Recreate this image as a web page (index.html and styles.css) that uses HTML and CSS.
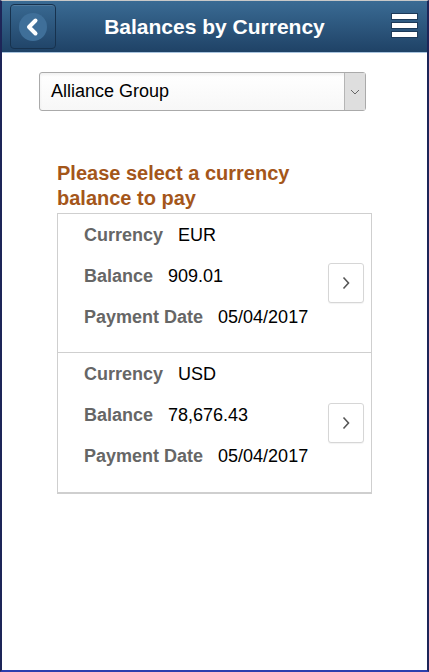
FILE: index.html
```html
<!DOCTYPE html>
<html>
<head>
<meta charset="utf-8">
<title>Balances by Currency</title>
<link rel="stylesheet" href="styles.css">
</head>
<body>
<div class="screen">
  <div class="header">
    <div class="back-btn">
      <span class="back-circle">
        <svg width="28" height="28" viewBox="0 0 28 28">
          <path d="M16.5 7.5 L10 14 L16.5 20.5" fill="none" stroke="#fff" stroke-width="4" stroke-linecap="round" stroke-linejoin="round"/>
        </svg>
      </span>
    </div>
    <h1 class="title">Balances by Currency</h1>
    <div class="menu-btn">
      <span class="bar"></span>
      <span class="bar"></span>
      <span class="bar"></span>
    </div>
  </div>

  <div class="content">
    <div class="select">
      <span class="select-text">Alliance Group</span>
      <span class="select-arrow">
        <svg width="10" height="6" viewBox="0 0 10 6"><path d="M1 1 L5 5 L9 1" fill="none" stroke="#666" stroke-width="1"/></svg>
      </span>
    </div>

    <h2 class="prompt">Please select a currency balance to pay</h2>

    <div class="list">
      <div class="row">
        <div class="fields">
          <div class="field"><span class="label">Currency</span><span class="value">EUR</span></div>
          <div class="field"><span class="label">Balance</span><span class="value">909.01</span></div>
          <div class="field"><span class="label">Payment Date</span><span class="value">05/04/2017</span></div>
        </div>
        <div class="go-btn">
          <svg width="10" height="14" viewBox="0 0 10 14"><path d="M2.5 1.5 L7.5 7 L2.5 12.5" fill="none" stroke="#555" stroke-width="1.6"/></svg>
        </div>
      </div>
      <div class="row">
        <div class="fields">
          <div class="field"><span class="label">Currency</span><span class="value">USD</span></div>
          <div class="field"><span class="label">Balance</span><span class="value">78,676.43</span></div>
          <div class="field"><span class="label">Payment Date</span><span class="value">05/04/2017</span></div>
        </div>
        <div class="go-btn">
          <svg width="10" height="14" viewBox="0 0 10 14"><path d="M2.5 1.5 L7.5 7 L2.5 12.5" fill="none" stroke="#555" stroke-width="1.6"/></svg>
        </div>
      </div>
    </div>
  </div>
</div>
</body>
</html>
```

FILE: styles.css
```css
body {
    margin: 0;
    font-family: "Liberation Sans", Arial, sans-serif;
    background: #fff;
}

.screen {
    box-sizing: border-box;
    width: 429px;
    height: 672px;
    border-top: 1px solid #c8c8c8;
    border-left: 2px solid #1d2558;
    border-right: 2px solid #1d2558;
    border-bottom: 2px solid #2b3fae;
    background: #fff;
}

/* header bar */
.header {
    height: 51px;
    display: flex;
    align-items: center;
    justify-content: space-between;
    background: linear-gradient(#3a6b94, #1f4266);
    border-bottom: 1px solid #a9c4de;
    padding: 0 8px 0 8px;
}

.back-btn {
    box-sizing: border-box;
    width: 46px;
    height: 45px;
    display: flex;
    align-items: center;
    justify-content: center;
    border: 1px solid #17324e;
    border-radius: 4px;
    box-shadow: inset 0 1px 0 rgba(255,255,255,.12);
}

.back-circle {
    width: 28px;
    height: 28px;
    border-radius: 50%;
    background: #3f6f99;
    display: flex;
}

.title {
    margin: 0;
    color: #fff;
    font-size: 21px;
    font-weight: bold;
    padding-right: 19px;
}

.menu-btn {
    display: flex;
    flex-direction: column;
    gap: 4px;
    padding-right: 2px;
    padding-bottom: 2px;
}

.bar {
    display: block;
    width: 25px;
    height: 5px;
    background: #fff;
    box-shadow: 0 0 0 1px #1d3b5a;
}

/* main area */
.content {
    padding: 19px 0 0 37px;
}

.select {
    box-sizing: border-box;
    width: 327px;
    height: 39px;
    display: flex;
    border: 1px solid #aaa;
    border-radius: 3px;
    background: linear-gradient(#fff, #f7f7f7);
    box-shadow: inset 0 2px 3px rgba(0,0,0,.06);
}

.select-text {
    flex: 1;
    padding-left: 11px;
    font-size: 18px;
    line-height: 37px;
    color: #000;
}

.select-arrow {
    width: 20px;
    display: flex;
    align-items: center;
    justify-content: center;
    background: #dedede;
    border-left: 1px solid #b5b5b5;
}

.prompt {
    margin: 50px 0 2px 18px;
    max-width: 290px;
    color: #a4561a;
    font-size: 20px;
    line-height: 25px;
    font-weight: bold;
}

.list {
    box-sizing: border-box;
    width: 315px;
    margin-left: 18px;
    border: 1px solid #cfcfcf;
    border-bottom: 2px solid #cfcfcf;
}

.row {
    display: flex;
    align-items: center;
    justify-content: space-between;
    height: 138px;
    box-sizing: border-box;
    padding: 0 7px 0 26px;
}

.row + .row {
    height: 140px;
    border-top: 1px solid #cfcfcf;
}

.fields {
    display: flex;
    flex-direction: column;
    gap: 19px;
    padding-bottom: 15px;
}

.field {
    font-size: 18px;
    line-height: 22px;
}

.label {
    color: #666;
    font-weight: bold;
    margin-right: 15px;
}

.value {
    color: #000;
}

.go-btn {
    box-sizing: border-box;
    width: 36px;
    height: 40px;
    display: flex;
    align-items: center;
    justify-content: center;
    border: 1px solid #d6d6d6;
    border-radius: 3px;
    background: #fff;
    box-shadow: 0 1px 1px rgba(0,0,0,.05);
}
```
